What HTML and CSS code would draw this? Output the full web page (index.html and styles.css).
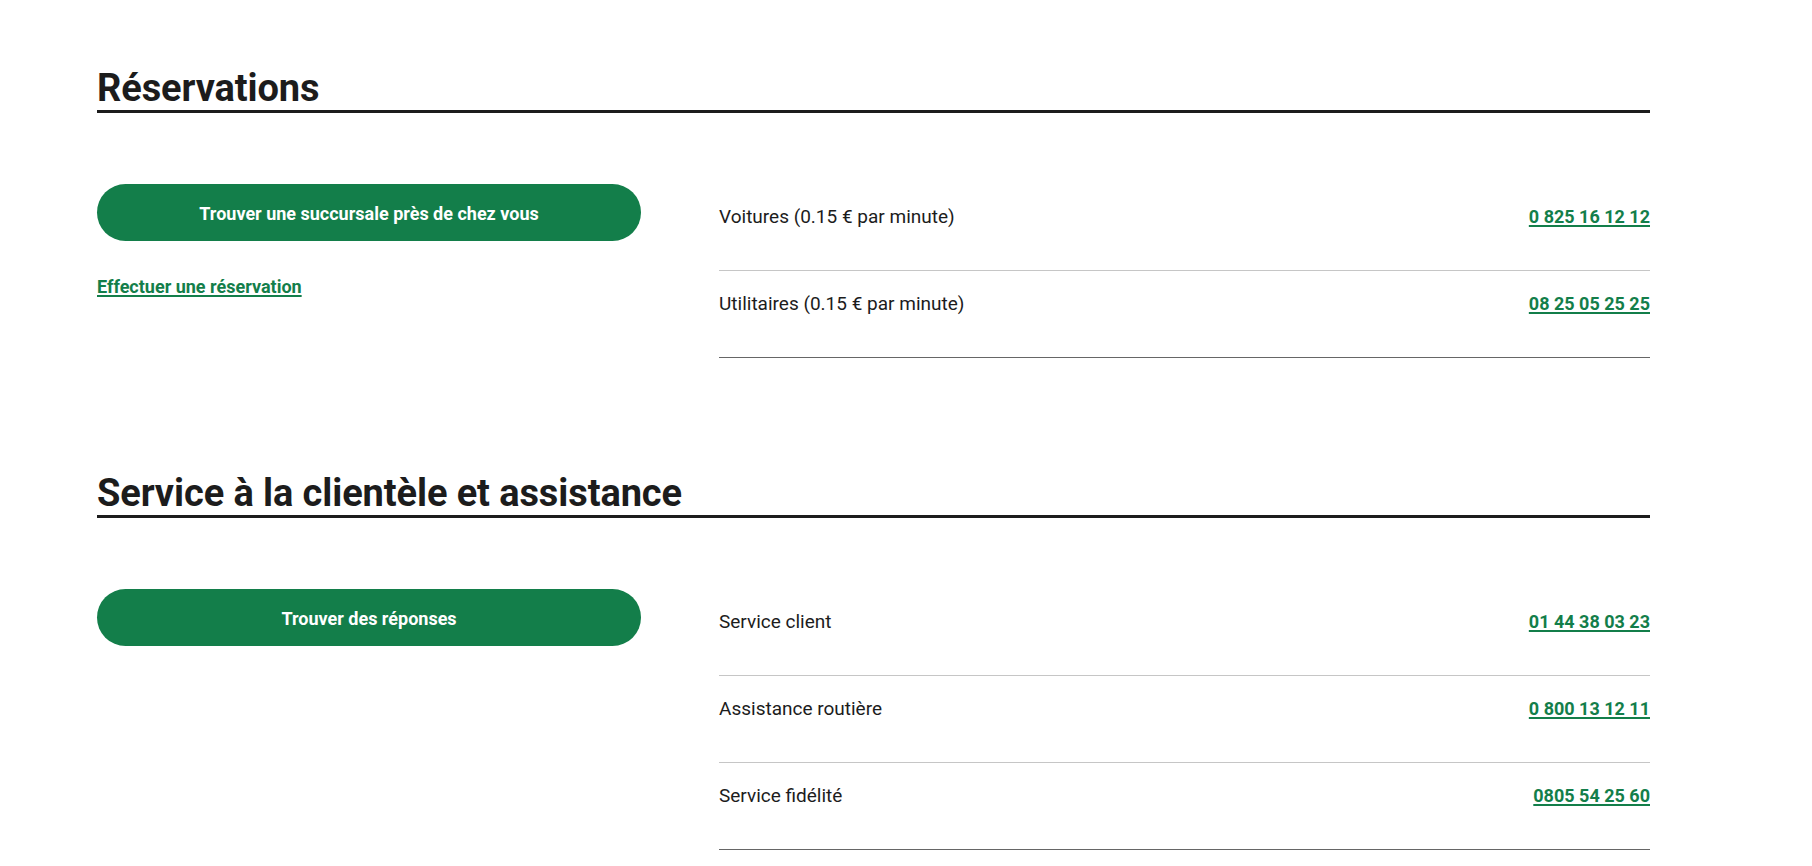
FILE: index.html
```html
<!DOCTYPE html>
<html lang="fr">
<head>
<meta charset="utf-8">
<title>Contact</title>
<link rel="stylesheet" href="styles.css">
</head>
<body>
<main class="page">
  <section class="section">
    <h2 class="section-title">Réservations</h2>
    <div class="section-body">
      <div class="actions">
        <a class="btn" href="#">Trouver une succursale près de chez vous</a>
        <a class="text-link" href="#">Effectuer une réservation</a>
      </div>
      <ul class="contacts">
        <li class="contact"><span class="label">Voitures (0.15 € par minute)</span><a class="phone" href="#">0 825 16 12 12</a></li>
        <li class="contact"><span class="label">Utilitaires (0.15 € par minute)</span><a class="phone" href="#">08 25 05 25 25</a></li>
      </ul>
    </div>
  </section>
  <section class="section">
    <h2 class="section-title">Service à la clientèle et assistance</h2>
    <div class="section-body">
      <div class="actions">
        <a class="btn" href="#">Trouver des réponses</a>
      </div>
      <ul class="contacts">
        <li class="contact"><span class="label">Service client</span><a class="phone" href="#">01 44 38 03 23</a></li>
        <li class="contact"><span class="label">Assistance routière</span><a class="phone" href="#">0 800 13 12 11</a></li>
        <li class="contact"><span class="label">Service fidélité</span><a class="phone" href="#">0805 54 25 60</a></li>
      </ul>
    </div>
  </section>
</main>
</body>
</html>
```
FILE: styles.css
```css
html, body {
  margin: 0;
  padding: 0;
  background: #ffffff;
}
body {
  font-family: Roboto, "Liberation Sans", sans-serif;
  color: #1c1c1c;
}
.page {
  width: 1553px;
  margin-left: 97px;
  padding-top: 67px;
}
.section + .section {
  margin-top: 114px;
}
.section-title {
  margin: 0;
  font-size: 38px;
  line-height: 43px;
  font-weight: 700;
  color: #1c1c1c;
  border-bottom: 3px solid #1c1c1c;
  letter-spacing: -0.1px;
}
.section-body {
  display: grid;
  grid-template-columns: 544px 1fr;
  column-gap: 78px;
  margin-top: 71px;
}
.actions {
  display: flex;
  flex-direction: column;
  align-items: flex-start;
}
.btn {
  display: flex;
  align-items: center;
  justify-content: center;
  width: 100%;
  height: 57px;
  padding-top: 1px;
  box-sizing: border-box;
  border-radius: 29px;
  background: #137e4a;
  color: #ffffff;
  font-size: 18px;
  font-weight: 700;
  text-decoration: none;
}
.text-link {
  margin-top: 34px;
  font-size: 18px;
  line-height: 24px;
  font-weight: 700;
  color: #137e4a;
  text-decoration: underline;
  text-decoration-thickness: 2px;
  text-underline-offset: 2px;
}
.contacts {
  list-style: none;
  margin: 0;
  padding: 0;
}
.contact {
  display: flex;
  justify-content: space-between;
  align-items: baseline;
  padding: 21px 0 41px;
  line-height: 24px;
  border-bottom: 1px solid #c6c6c6;
}
.contact:last-child {
  border-bottom-color: #666666;
}
.label {
  font-size: 19px;
}
.phone {
  font-size: 18px;
  font-weight: 700;
  color: #137e4a;
  text-decoration: underline;
  text-decoration-thickness: 2px;
  text-underline-offset: 2px;
}
```
